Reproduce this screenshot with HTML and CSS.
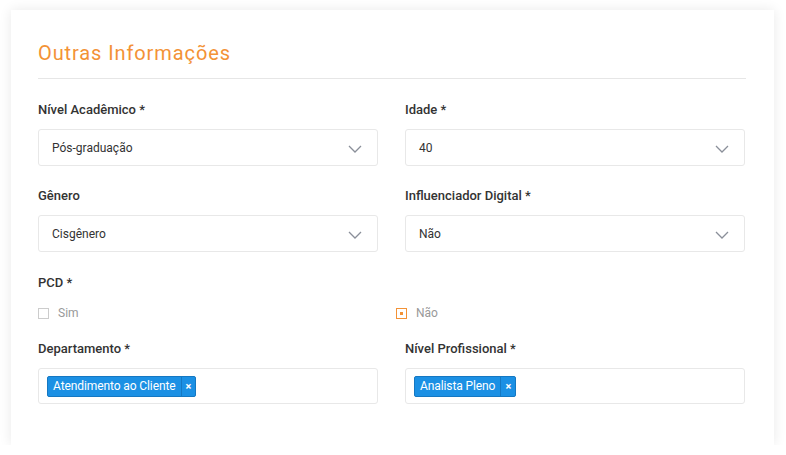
FILE: index.html
```html
<!DOCTYPE html>
<html lang="pt-BR">
<head>
    <meta charset="UTF-8">
    <meta name="viewport" content="width=device-width, initial-scale=1.0">
    <title>Outras Informações</title>
    <link rel="stylesheet" href="styles.css">
</head>
<body>
    <div class="card">
        <h1 class="title">Outras Informações</h1>
        <div class="form-grid">
            <div class="field">
                <label>Nível Acadêmico *</label>
                <div class="select">
                    <span>Pós-graduação</span>
                    <svg class="chevron" width="14" height="8" viewBox="0 0 14 8"><polyline points="1,1 7,7 13,1" /></svg>
                </div>
            </div>
            <div class="field">
                <label>Idade *</label>
                <div class="select">
                    <span>40</span>
                    <svg class="chevron" width="14" height="8" viewBox="0 0 14 8"><polyline points="1,1 7,7 13,1" /></svg>
                </div>
            </div>
            <div class="field row2">
                <label>Gênero</label>
                <div class="select">
                    <span>Cisgênero</span>
                    <svg class="chevron" width="14" height="8" viewBox="0 0 14 8"><polyline points="1,1 7,7 13,1" /></svg>
                </div>
            </div>
            <div class="field row2">
                <label>Influenciador Digital *</label>
                <div class="select">
                    <span>Não</span>
                    <svg class="chevron" width="14" height="8" viewBox="0 0 14 8"><polyline points="1,1 7,7 13,1" /></svg>
                </div>
            </div>
        </div>

        <div class="field field-radio">
            <label>PCD *</label>
            <div class="options">
                <div class="option">
                    <span class="box"></span>
                    <span>Sim</span>
                </div>
                <div class="option">
                    <span class="box checked"></span>
                    <span>Não</span>
                </div>
            </div>
        </div>

        <div class="form-grid">
            <div class="field after-radio">
                <label>Departamento *</label>
                <div class="tags">
                    <span class="tag"><span class="tag-text">Atendimento ao Cliente</span><span class="tag-x">×</span></span>
                </div>
            </div>
            <div class="field after-radio">
                <label>Nível Profissional *</label>
                <div class="tags">
                    <span class="tag"><span class="tag-text">Analista Pleno</span><span class="tag-x">×</span></span>
                </div>
            </div>
        </div>
    </div>
</body>
</html>
```

FILE: styles.css
```css
body {
    margin: 0;
    background: #ffffff;
    font-family: Roboto, "Liberation Sans", Arial, sans-serif;
    color: #333;
}

.card {
    width: 763px;
    height: 435px;
    box-sizing: border-box;
    margin: 10px 0 0 11px;
    padding: 30px 28px 0 27px;
    background: #fff;
    box-shadow: 0 0 12px rgba(0, 0, 0, 0.09);
}

.title {
    margin: 0;
    height: 39px;
    box-sizing: border-box;
    font-size: 20px;
    line-height: 26px;
    font-weight: 400;
    letter-spacing: 0.9px;
    color: #f39236;
    border-bottom: 1px solid #e6e6e6;
}

.form-grid {
    display: grid;
    grid-template-columns: 340px 340px;
    column-gap: 27px;
}

.field {
    margin-top: 22px;
}

.field.row2 {
    margin-top: 21px;
}

.field.after-radio {
    margin-top: 16px;
}

.field label {
    display: block;
    height: 18px;
    margin-bottom: 10px;
    font-size: 13px;
    line-height: 18px;
    font-weight: 500;
    color: #333;
}

.select {
    height: 37px;
    box-sizing: border-box;
    border: 1px solid #e8e8e8;
    border-radius: 3px;
    padding: 0 14px 0 13px;
    display: flex;
    align-items: center;
    justify-content: space-between;
    font-size: 12px;
    color: #333;
}

.chevron {
    margin-top: 2px;
    margin-right: 1px;
}

.chevron polyline {
    fill: none;
    stroke: #8a8f99;
    stroke-width: 1.3;
}

.options {
    display: grid;
    grid-template-columns: 358px auto;
    height: 22px;
    align-items: center;
}

.option {
    display: flex;
    align-items: center;
    gap: 9px;
    font-size: 12px;
    color: #999;
}

.box {
    width: 9px;
    height: 9px;
    border: 1px solid #ccc;
    display: flex;
    align-items: center;
    justify-content: center;
}

.box.checked {
    border-color: #f39236;
}

.box.checked::after {
    content: "";
    width: 3px;
    height: 3px;
    background: #f39236;
}

.tags {
    height: 36px;
    box-sizing: border-box;
    border: 1px solid #e8e8e8;
    border-radius: 3px;
    padding: 0 8px;
    display: flex;
    align-items: center;
}

.tag {
    display: inline-flex;
    height: 21px;
    box-sizing: border-box;
    background: #1b90e4;
    border: 1px solid #1578c2;
    border-radius: 2px;
    color: #fff;
    font-size: 12px;
    line-height: 19px;
}

.tag-text {
    padding: 0 5px;
    letter-spacing: -0.1px;
}

.tag-x {
    border-left: 1px solid #1578c2;
    padding: 0 4px;
    font-size: 11px;
    font-weight: 700;
}
```
